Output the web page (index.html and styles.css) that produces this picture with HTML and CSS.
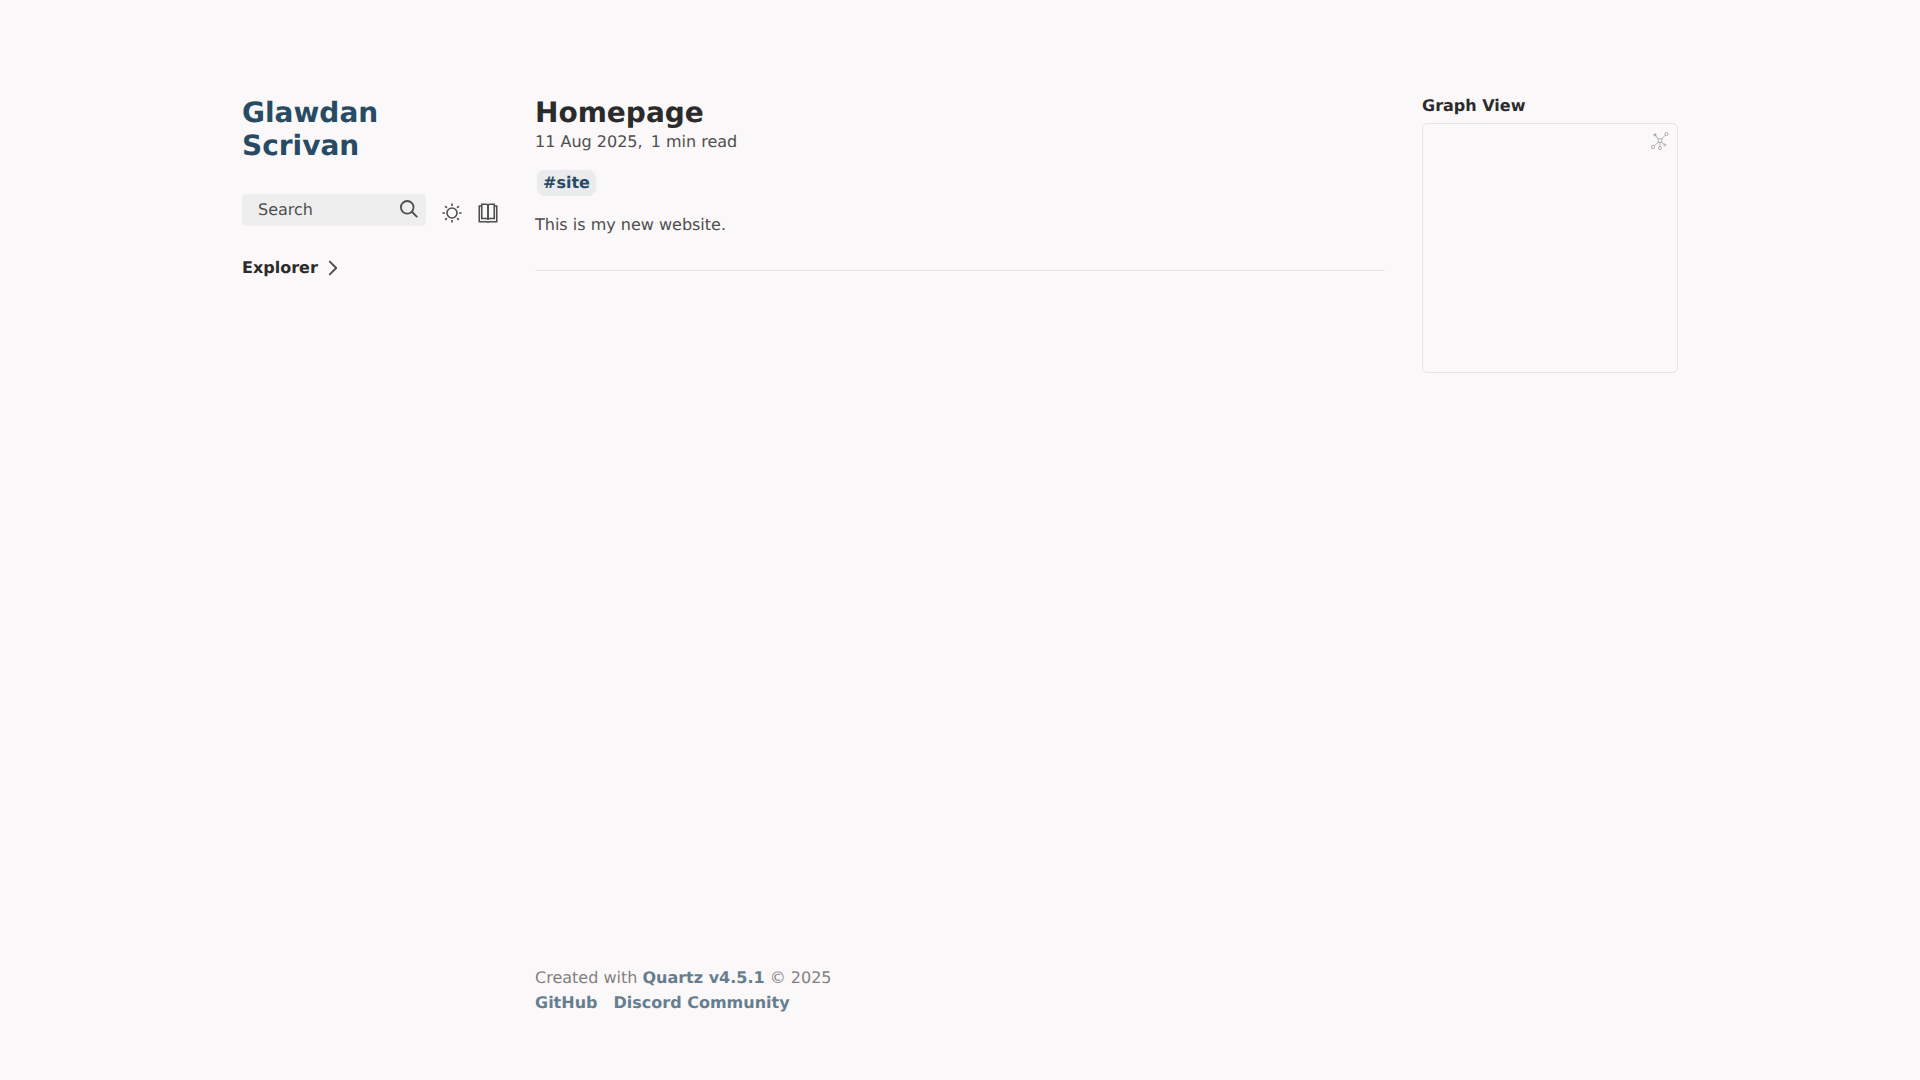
FILE: index.html
```html
<!DOCTYPE html>
<html lang="en">
<head>
    <meta charset="UTF-8">
    <meta name="viewport" content="width=device-width, initial-scale=1.0">
    <title>Homepage</title>
    <link rel="stylesheet" href="styles.css">
</head>
<body>
    <div class="page">
        <!-- Left sidebar -->
        <div class="sidebar-left">
            <h2 class="site-title">Glawdan Scrivan</h2>
            <div class="tools">
                <div class="search">
                    <span>Search</span>
                    <svg class="search-icon" viewBox="0 0 19.9 19.7">
                        <path d="M18.5 18.3l-5.4-5.4"></path>
                        <circle cx="8" cy="8" r="7"></circle>
                    </svg>
                </div>
                <svg class="sun-icon" viewBox="0 0 24 24">
                    <circle cx="12" cy="12" r="6"></circle>
                    <path d="M12 .5v3M12 20.500v3M.5 12h3M20.500 12h3M3.800 3.800l2 2M18.200 18.200l2 2M3.800 20.200l2-2M18.200 5.800l2-2"></path>
                </svg>
                <svg class="book-icon" viewBox="0 0 24 24">
                    <path d="M4.500 1.500h5.500c1.300 0 2 .8 2 2v16.500c0-1-.8-1.500-2-1.500H4.500z"></path>
                    <path d="M19.500 1.500h-5.500c-1.300 0-2 .8-2 2v16.500c0-1 .8-1.500 2-1.500h5.500z"></path>
                    <path d="M4.500 3.500H1.500V22.500h9c.6 0 1 0 1.500 .6c.5-.6.9-.6 1.500-.6h9V3.500H19.500"></path>
                </svg>
            </div>
            <div class="explorer">
                <span>Explorer</span>
                <svg class="chevron" viewBox="7.500 4.500 9 15">
                    <polyline points="9 18 15 12 9 6"></polyline>
                </svg>
            </div>
        </div>

        <!-- Article -->
        <div class="center">
            <h1 class="article-title">Homepage</h1>
            <p class="meta">11 Aug 2025, <span class="meta-gap">1 min read</span></p>
            <ul class="tags">
                <li><a href="#">#site</a></li>
            </ul>
            <p class="body-text">This is my new website.</p>
            <hr>
            <footer>
                <p>Created with <a href="#">Quartz v4.5.1</a> © 2025</p>
                <ul class="footer-links">
                    <li><a href="#">GitHub</a></li>
                    <li><a href="#">Discord Community</a></li>
                </ul>
            </footer>
        </div>

        <!-- Right sidebar -->
        <div class="sidebar-right">
            <h3 class="graph-title">Graph View</h3>
            <div class="graph">
                <svg class="graph-icon" viewBox="0 0 20 20">
                    <path d="M8 7.500h4v4H8zM8 7.500L4.800 3.500M12 7.500L16 3.500M8 11.500L3.500 15.500M10 11.500V16.200M12 11.500L14.700 13.800"></path>
                    <circle class="dot" cx="4.500" cy="3.200" r="1.200"></circle>
                    <circle cx="17.200" cy="2.200" r="1.800"></circle>
                    <circle cx="2.200" cy="16.700" r="1.800"></circle>
                    <circle cx="10" cy="17.900" r="1.700"></circle>
                    <circle cx="15.500" cy="14.500" r="1.200"></circle>
                </svg>
            </div>
        </div>
    </div>
</body>
</html>
```

FILE: styles.css
```css
body {
    font-family: "DejaVu Sans", sans-serif;
    font-size: 16px;
    margin: 0;
    background: #faf8f8;
    color: #4e4e4e;
    -webkit-font-smoothing: antialiased;
    text-rendering: geometricPrecision;
}
.page {
    display: flex;
    min-height: 1080px;
    box-sizing: border-box;
    padding: 96px 242px 0;
}
.sidebar-left {
    width: 293px;
    flex-shrink: 0;
}
.site-title {
    width: 170px;
    margin: 0;
    font-size: 28px;
    line-height: 33px;
    font-weight: 700;
    color: #284b63;
}
.tools {
    display: flex;
    align-items: center;
    margin-top: 32px;
}
.search {
    width: 184px;
    height: 32px;
    box-sizing: border-box;
    padding: 0 8px 2px 16px;
    display: flex;
    align-items: center;
    justify-content: space-between;
    background: #eeeeee;
    border-radius: 4px;
}
.search-icon {
    width: 18px;
    height: 18px;
    fill: none;
    stroke: #4e4e4e;
    stroke-width: 2;
    stroke-linecap: round;
}
.sun-icon {
    width: 20px;
    height: 20px;
    margin: 6px 0 0 16px;
    fill: none;
    stroke: #4e4e4e;
    stroke-width: 1.900;
}
.book-icon {
    width: 20px;
    height: 20px;
    margin: 6px 0 0 16px;
    fill: none;
    stroke: #4e4e4e;
    stroke-width: 1.900;
}
.explorer {
    display: flex;
    align-items: center;
    gap: 10px;
    margin-top: 32px;
    font-weight: 700;
    color: #2b2b2b;
}
.chevron {
    width: 10px;
    height: 16px;
    fill: none;
    stroke: #4e4e4e;
    stroke-width: 1.800;
    stroke-linecap: round;
    stroke-linejoin: round;
}
.center {
    width: 850px;
    flex-shrink: 0;
    display: flex;
    flex-direction: column;
}
.article-title {
    margin: 0;
    font-size: 28px;
    line-height: 33px;
    font-weight: 700;
    color: #2b2b2b;
}
.meta {
    margin: 1px 0 0;
    line-height: 24px;
}
.meta-gap {
    margin-left: 3px;
}
.tags {
    display: flex;
    list-style: none;
    margin: 16px 0 0;
    padding: 0;
}
.tags a {
    display: block;
    margin-left: 2px;
    padding: 0 6px;
    line-height: 26px;
    border-radius: 8px;
    background: rgba(143, 159, 169, 0.15);
    color: #284b63;
    font-weight: 700;
    text-decoration: none;
}
.body-text {
    margin: 17px 0 0;
    line-height: 24px;
}
hr {
    width: 100%;
    margin: 33px 0 0;
    border: 0;
    border-top: 1px solid #e5e5e5;
}
footer {
    margin-top: auto;
    padding-bottom: 65px;
    opacity: 0.7;
    line-height: 25px;
}
footer p {
    margin: 0;
}
footer a {
    color: #284b63;
    font-weight: 700;
    text-decoration: none;
}
.footer-links {
    display: flex;
    gap: 16px;
    list-style: none;
    margin: 0;
    padding: 0;
}
.sidebar-right {
    width: 256px;
    flex-shrink: 0;
    margin-left: 37px;
}
.graph-title {
    margin: 0;
    font-size: 16px;
    line-height: 20px;
    font-weight: 700;
    color: #2b2b2b;
}
.graph {
    position: relative;
    height: 250px;
    margin-top: 7px;
    box-sizing: border-box;
    border: 1px solid #e5e5e5;
    border-radius: 5px;
}
.graph-icon {
    position: absolute;
    top: 8px;
    right: 8px;
    width: 18px;
    height: 18px;
    fill: none;
    stroke: #a8a8a8;
    stroke-width: 1;
}
.graph-icon .dot {
    fill: #a8a8a8;
}
```
